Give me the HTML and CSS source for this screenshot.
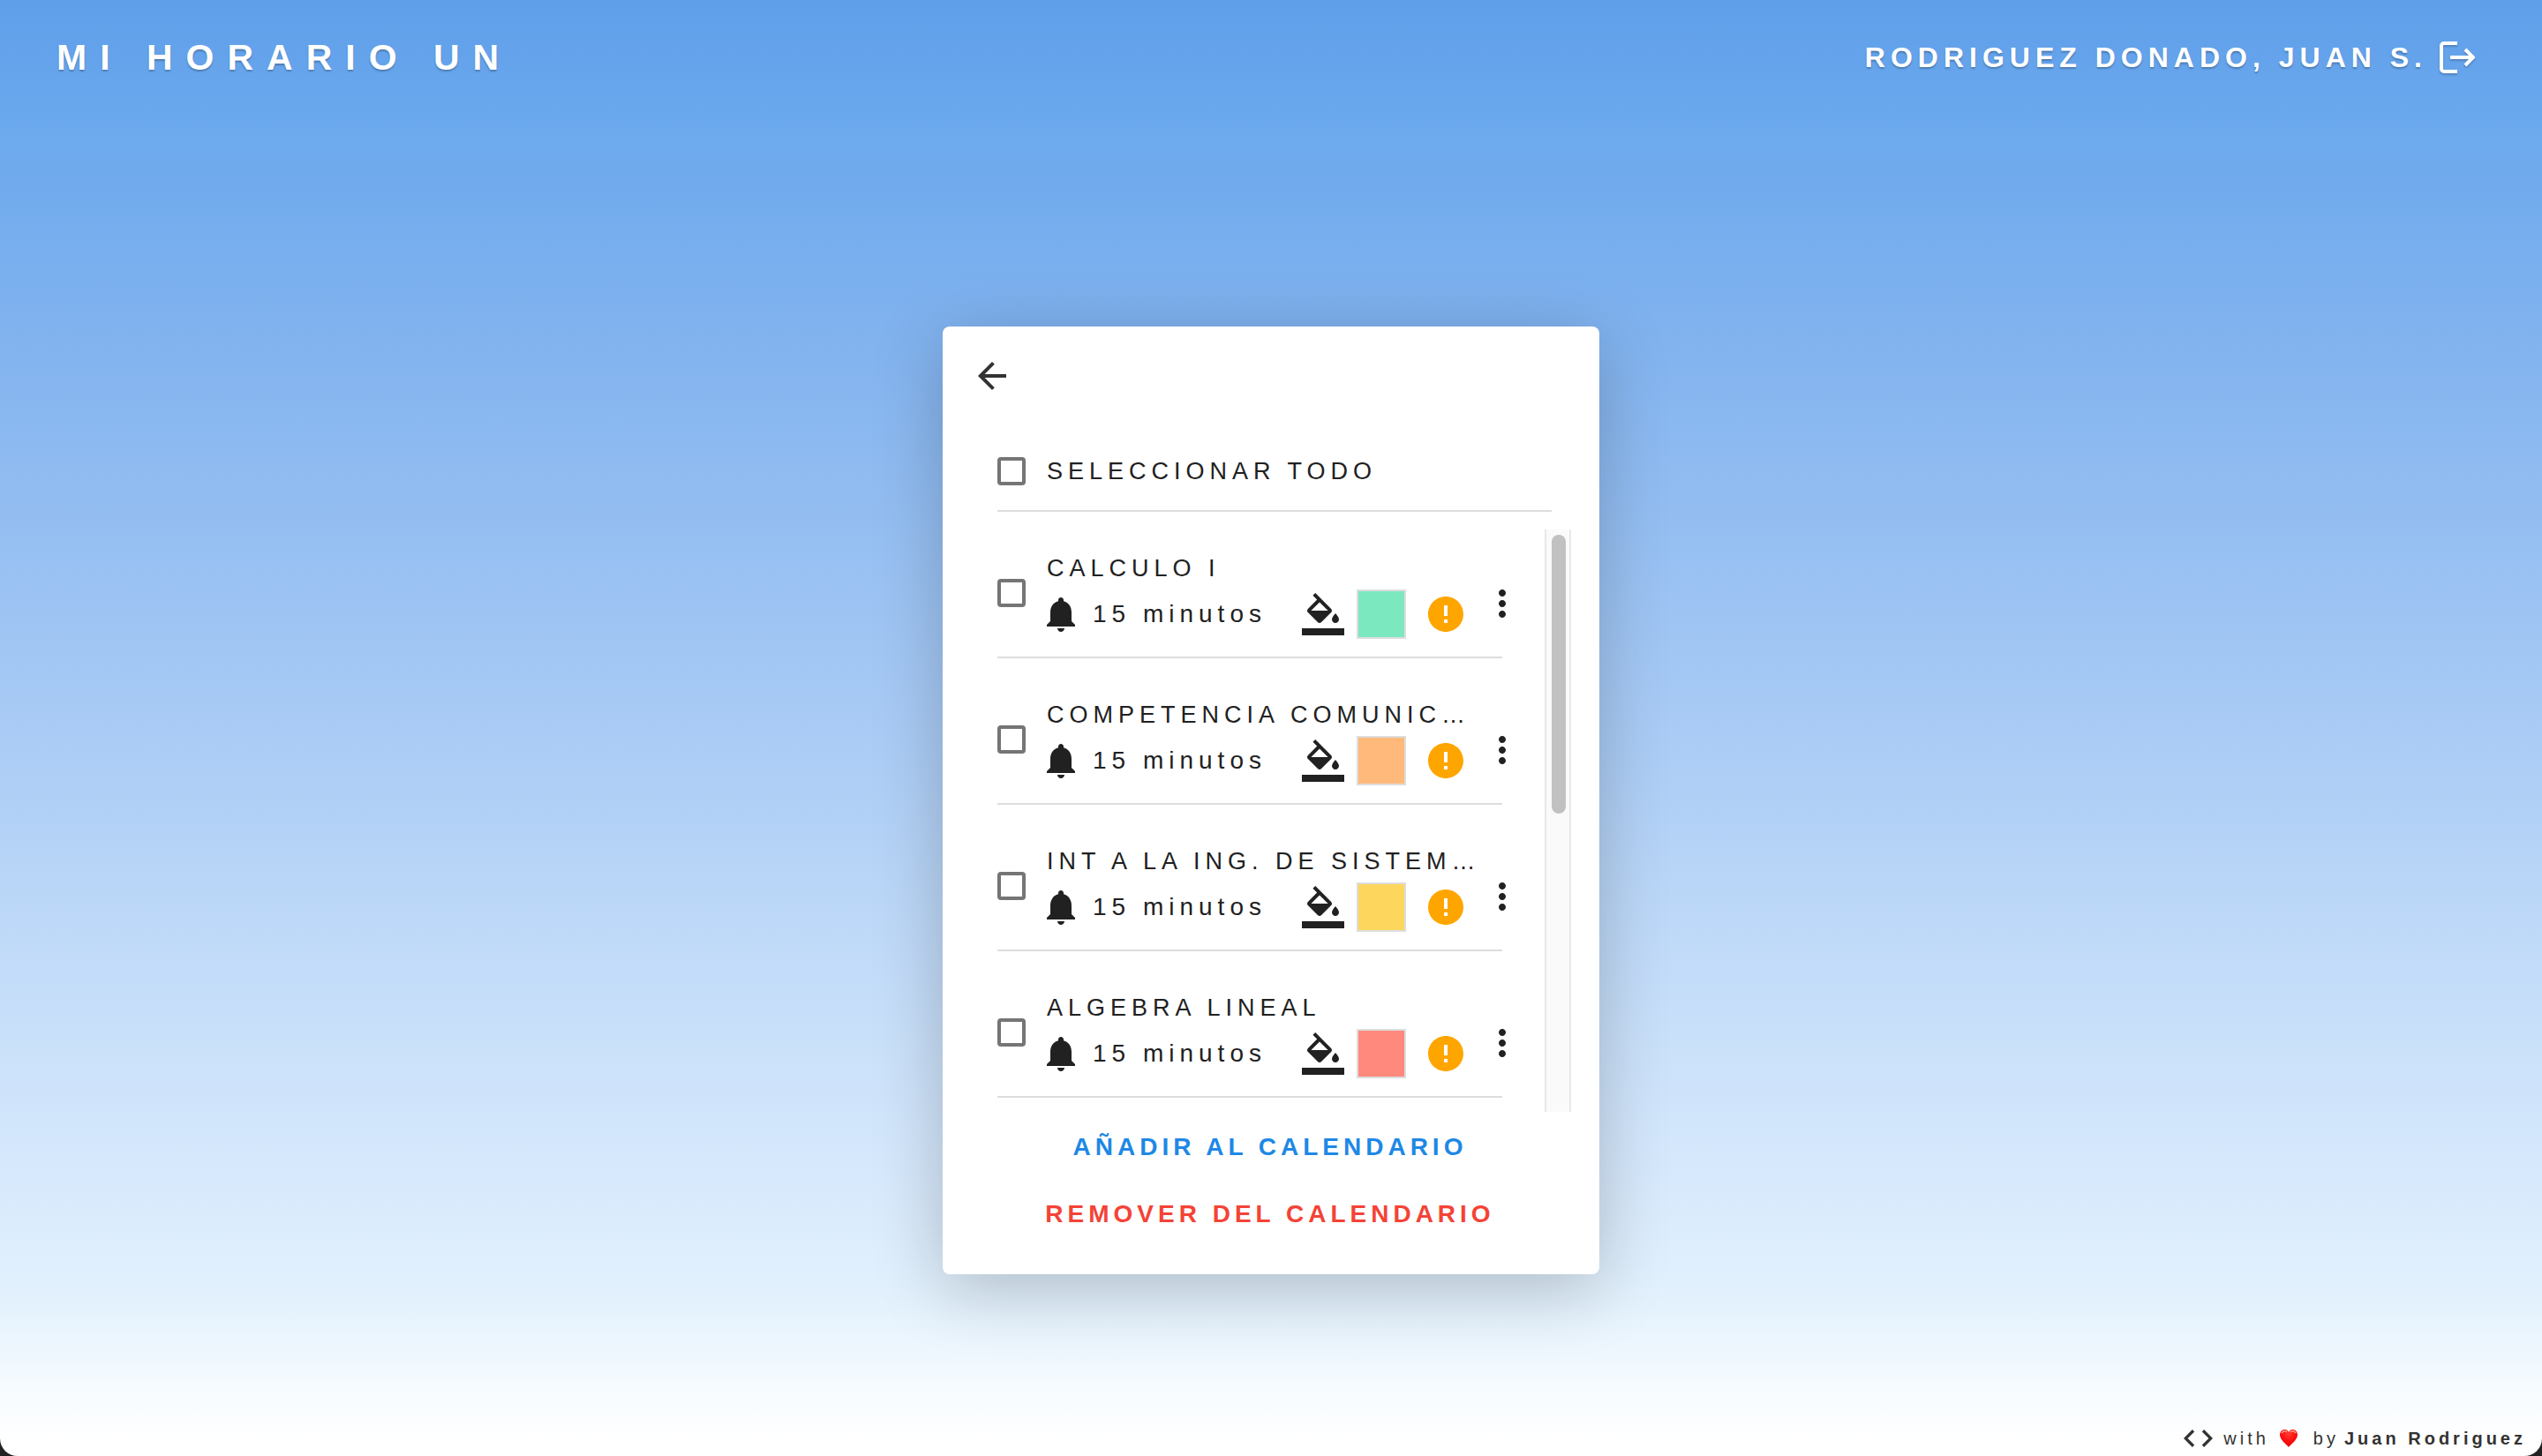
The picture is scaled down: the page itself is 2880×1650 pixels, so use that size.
FILE: index.html
```html
<!DOCTYPE html>
<html lang="es">
<head>
<meta charset="utf-8">
<meta name="viewport" content="width=device-width, initial-scale=1">
<title>Mi Horario UN</title>
<link rel="stylesheet" href="styles.css">
</head>
<body>
<svg class="sprite" aria-hidden="true">
  <symbol id="bell" viewBox="4 0 16 24"><path d="M12 22c1.1 0 2-.9 2-2h-4c0 1.1.89 2 2 2zm6-6v-5c0-3.07-1.64-5.64-4.5-6.32V4c0-.83-.67-1.5-1.5-1.5s-1.5.67-1.5 1.5v.68C7.63 5.36 6 7.92 6 11v5l-2 2v1h16v-1l-2-2z"/></symbol>
  <symbol id="fill" viewBox="0 0 24 24"><path d="M16.56 8.94L7.62 0 6.21 1.41l2.38 2.38-5.15 5.15c-.59.59-.59 1.54 0 2.12l5.5 5.5c.29.29.68.44 1.06.44s.77-.15 1.06-.44l5.5-5.5c.59-.58.59-1.53 0-2.12zM5.21 10L10 5.21 14.79 10H5.21zM19 11.5s-2 2.17-2 3.5c0 1.1.9 2 2 2s2-.9 2-2c0-1.33-2-3.5-2-3.5zM0 20h24v4H0z"/></symbol>
  <symbol id="alert" viewBox="2 0 20 24"><path d="M12 2C6.48 2 2 6.48 2 12s4.48 10 10 10 10-4.48 10-10S17.52 2 12 2zm1 15h-2v-2h2v2zm0-4h-2V7h2v6z"/></symbol>
  <symbol id="more" viewBox="0 0 24 24"><path d="M12 8c1.1 0 2-.9 2-2s-.9-2-2-2-2 .9-2 2 .9 2 2 2zm0 2c-1.1 0-2 .9-2 2s.9 2 2 2 2-.9 2-2-.9-2-2-2zm0 6c-1.1 0-2 .9-2 2s.9 2 2 2 2-.9 2-2-.9-2-2-2z"/></symbol>
</svg>
<div class="page">
  <header class="topbar">
    <h1 class="brand">MI HORARIO UN</h1>
    <div class="user">
      <span>RODRIGUEZ DONADO, JUAN S.</span>
      <button class="icon-button logout" type="button" aria-label="Salir">
        <svg viewBox="0 0 40 36" width="40" height="36"><path d="M20 2H5a3 3 0 0 0-3 3v26a3 3 0 0 0 3 3h15M12 18h25M29 9l9 9-9 9" fill="none" stroke="currentColor" stroke-width="4"/></svg>
      </button>
    </div>
  </header>

  <main class="main">
    <section class="card">
      <button class="icon-button back" type="button" aria-label="Volver">
        <svg viewBox="0 0 24 24" width="48" height="48"><path d="M20 11H7.83l5.59-5.59L12 4l-8 8 8 8 1.41-1.41L7.83 13H20v-2z"/></svg>
      </button>
      <label class="select-all"><input class="check" type="checkbox"><span class="subject">SELECCIONAR TODO</span></label>
      <div class="courses">
        <ul class="list">
          <li class="course">
            <input class="check" type="checkbox" id="c1">
            <div class="body">
              <label class="subject" for="c1">CALCULO I</label>
              <div class="details">
                <svg class="bell"><use href="#bell"/></svg><span class="time">15 minutos</span>
                <svg class="fill"><use href="#fill"/></svg><button class="swatch green" type="button" aria-label="Color"></button>
                <svg class="alert"><use href="#alert"/></svg>
              </div>
            </div>
            <button class="icon-button more" type="button" aria-label="Opciones"><svg width="48" height="48"><use href="#more"/></svg></button>
          </li>
          <li class="course">
            <input class="check" type="checkbox" id="c2">
            <div class="body">
              <label class="subject" for="c2">COMPETENCIA COMUNIC…</label>
              <div class="details">
                <svg class="bell"><use href="#bell"/></svg><span class="time">15 minutos</span>
                <svg class="fill"><use href="#fill"/></svg><button class="swatch orange" type="button" aria-label="Color"></button>
                <svg class="alert"><use href="#alert"/></svg>
              </div>
            </div>
            <button class="icon-button more" type="button" aria-label="Opciones"><svg width="48" height="48"><use href="#more"/></svg></button>
          </li>
          <li class="course">
            <input class="check" type="checkbox" id="c3">
            <div class="body">
              <label class="subject" for="c3">INT A LA ING. DE SISTEM…</label>
              <div class="details">
                <svg class="bell"><use href="#bell"/></svg><span class="time">15 minutos</span>
                <svg class="fill"><use href="#fill"/></svg><button class="swatch yellow" type="button" aria-label="Color"></button>
                <svg class="alert"><use href="#alert"/></svg>
              </div>
            </div>
            <button class="icon-button more" type="button" aria-label="Opciones"><svg width="48" height="48"><use href="#more"/></svg></button>
          </li>
          <li class="course">
            <input class="check" type="checkbox" id="c4">
            <div class="body">
              <label class="subject" for="c4">ALGEBRA LINEAL</label>
              <div class="details">
                <svg class="bell"><use href="#bell"/></svg><span class="time">15 minutos</span>
                <svg class="fill"><use href="#fill"/></svg><button class="swatch red" type="button" aria-label="Color"></button>
                <svg class="alert"><use href="#alert"/></svg>
              </div>
            </div>
            <button class="icon-button more" type="button" aria-label="Opciones"><svg width="48" height="48"><use href="#more"/></svg></button>
          </li>
        </ul>
        <div class="scrollbar"><div class="thumb"></div></div>
      </div>
      <div class="actions">
        <button class="action add" type="button">AÑADIR AL CALENDARIO</button>
        <button class="action remove" type="button">REMOVER DEL CALENDARIO</button>
      </div>
    </section>
  </main>

  <footer class="credits">
    <svg class="code" viewBox="2 6 20 12" width="33" height="20"><path d="M9.4 16.6L4.8 12l4.600-4.600L8 6l-6 6 6 6 1.400-1.400zm5.200 0l4.600-4.600-4.600-4.600L16 6l6 6-6 6-1.400-1.400z"/></svg>
    <span>with</span>
    <svg class="heart" viewBox="0 0 20 20" width="20" height="20">
      <defs><radialGradient id="love" cx="50%" cy="25%" r="80%"><stop offset="0" stop-color="#ff3b2f"/><stop offset=".5" stop-color="#fb1010"/><stop offset="1" stop-color="#e60000"/></radialGradient></defs>
      <path d="M10 20C8 17 0 12 0 6 0 2 3 0 5.500 0 8 0 9.500 1.500 10 3 10.500 1.500 12 0 14.500 0 17 0 20 2 20 6 20 12 12 17 10 20z" fill="url(#love)"/>
      <path d="M2 4q3-4 6-1M12 3q3-3 6 1" fill="none" stroke="#ff9d92" stroke-width="1.500"/>
    </svg>
    <span>by</span>
    <a class="author" href="#">Juan Rodriguez</a>
  </footer>
</div>
</body>
</html>
```
FILE: styles.css
```css
* {
  box-sizing: border-box;
}

body {
  margin: 0;
  background: #222;
  color: #212121;
  font-family: "Liberation Sans", Arial, sans-serif;
  font-size: 28px;
}

button {
  padding: 0;
  border: 0;
  background: none;
  color: inherit;
  font: inherit;
  cursor: pointer;
}

svg {
  display: block;
  flex: none;
  fill: currentColor;
}

.sprite {
  position: absolute;
  width: 0;
  height: 0;
}

.page {
  position: relative;
  display: flex;
  flex-direction: column;
  min-height: 100vh;
  border-radius: 0 0 20px 20px;
  background: linear-gradient(#5f9fea 0%, #6aa8ed 8%, #84b4ef 25%, #a9cbf5 50%, #c9e0fa 71%, #d7e9fc 81%, #e2f1fd 89%, #f8fcff 96%, #fff 99%);
}

.topbar {
  display: flex;
  align-items: center;
  justify-content: space-between;
  min-height: 130px;
  padding: 0 76px 0 64px;
  color: #fff;
  font-weight: 700;
  text-shadow: 0 2px 2px rgba(0, 0, 0, 0.25);
}

.brand {
  margin: 0;
  font-size: 41px;
  letter-spacing: 15px;
}

.user {
  display: flex;
  align-items: center;
  gap: 14px;
  font-size: 32px;
  letter-spacing: 6px;
}

.logout svg {
  filter: drop-shadow(0 2px 1px rgba(0, 0, 0, 0.2));
}

.main {
  display: flex;
  flex: 1;
  align-items: center;
  justify-content: center;
  padding-top: 34px;
}

.card {
  width: 744px;
  max-width: 100%;
  padding: 32px 32px 30px 62px;
  border-radius: 8px;
  background: #fff;
  box-shadow: 0 16px 80px rgba(0, 0, 0, 0.22);
}

.icon-button {
  display: block;
}

.back {
  margin-left: -30px;
  color: #333;
}

.check {
  appearance: none;
  flex: none;
  width: 32px;
  height: 32px;
  margin: 0;
  border: 4px solid #757575;
  border-radius: 4px;
}

.check:checked {
  background: #1e88e5;
}

.subject {
  font-size: 27px;
  line-height: 36px;
  letter-spacing: 6px;
  white-space: nowrap;
}

.select-all {
  display: flex;
  align-items: center;
  gap: 24px;
  height: 130px;
  margin-right: 20px;
  padding-top: 40px;
  border-bottom: 2px solid #ddd;
}

.courses {
  display: flex;
  gap: 24px;
  height: 680px;
}

.list {
  flex: 1;
  margin: 0;
  padding: 0;
  list-style: none;
}

.course {
  display: flex;
  align-items: flex-start;
  padding: 46px 0 22px;
  background: linear-gradient(#ddd, #ddd) left bottom / calc(100% - 24px) 2px no-repeat;
}

.course .check {
  margin-top: 30px;
  margin-right: 24px;
}

.body {
  flex: 1;
  min-width: 0;
}

.body .subject {
  display: block;
  margin-bottom: 6px;
}

.details {
  display: flex;
  align-items: center;
  padding-right: 20px;
}

.bell {
  width: 32px;
  height: 48px;
}

.time {
  flex: 1;
  margin-left: 20px;
  letter-spacing: 6px;
}

.fill {
  width: 48px;
  height: 48px;
}

.swatch {
  width: 56px;
  height: 56px;
  margin: 0 25px 0 14px;
  border: 2px solid #ddd;
}

.green { background: #7ce8c0; }
.orange { background: #ffb97a; }
.yellow { background: #fdd65d; }
.red { background: #ff897d; }

.alert {
  width: 40px;
  height: 48px;
  color: #ffa500;
}

.more {
  margin-top: 34px;
}

.card {
  padding-right: 34px;
}

.scrollbar {
  width: 30px;
  margin-top: 20px;
  padding: 6px;
  border: solid #e8e8e8;
  border-width: 0 2px;
  background: #fafafa;
}

.thumb {
  width: 16px;
  height: 316px;
  border-radius: 8px;
  background: #c1c1c1;
}

.actions {
  display: flex;
  flex-direction: column;
  align-items: center;
  padding: 2px 30px 0 0;
}

.action {
  height: 76px;
  font-weight: 700;
  letter-spacing: 5px;
}

.add { color: #1e88e5; }
.remove { color: #f44336; }

.credits {
  position: absolute;
  right: 18px;
  bottom: 8px;
  display: flex;
  align-items: center;
  color: #333;
  font-size: 20px;
  line-height: 24px;
  letter-spacing: 4px;
}

.heart {
  margin: 0 18px 0 12px;
}

.code {
  margin-right: 12px;
}

.author {
  margin-left: 6px;
  color: inherit;
  font-weight: 700;
  text-decoration: none;
}
```
